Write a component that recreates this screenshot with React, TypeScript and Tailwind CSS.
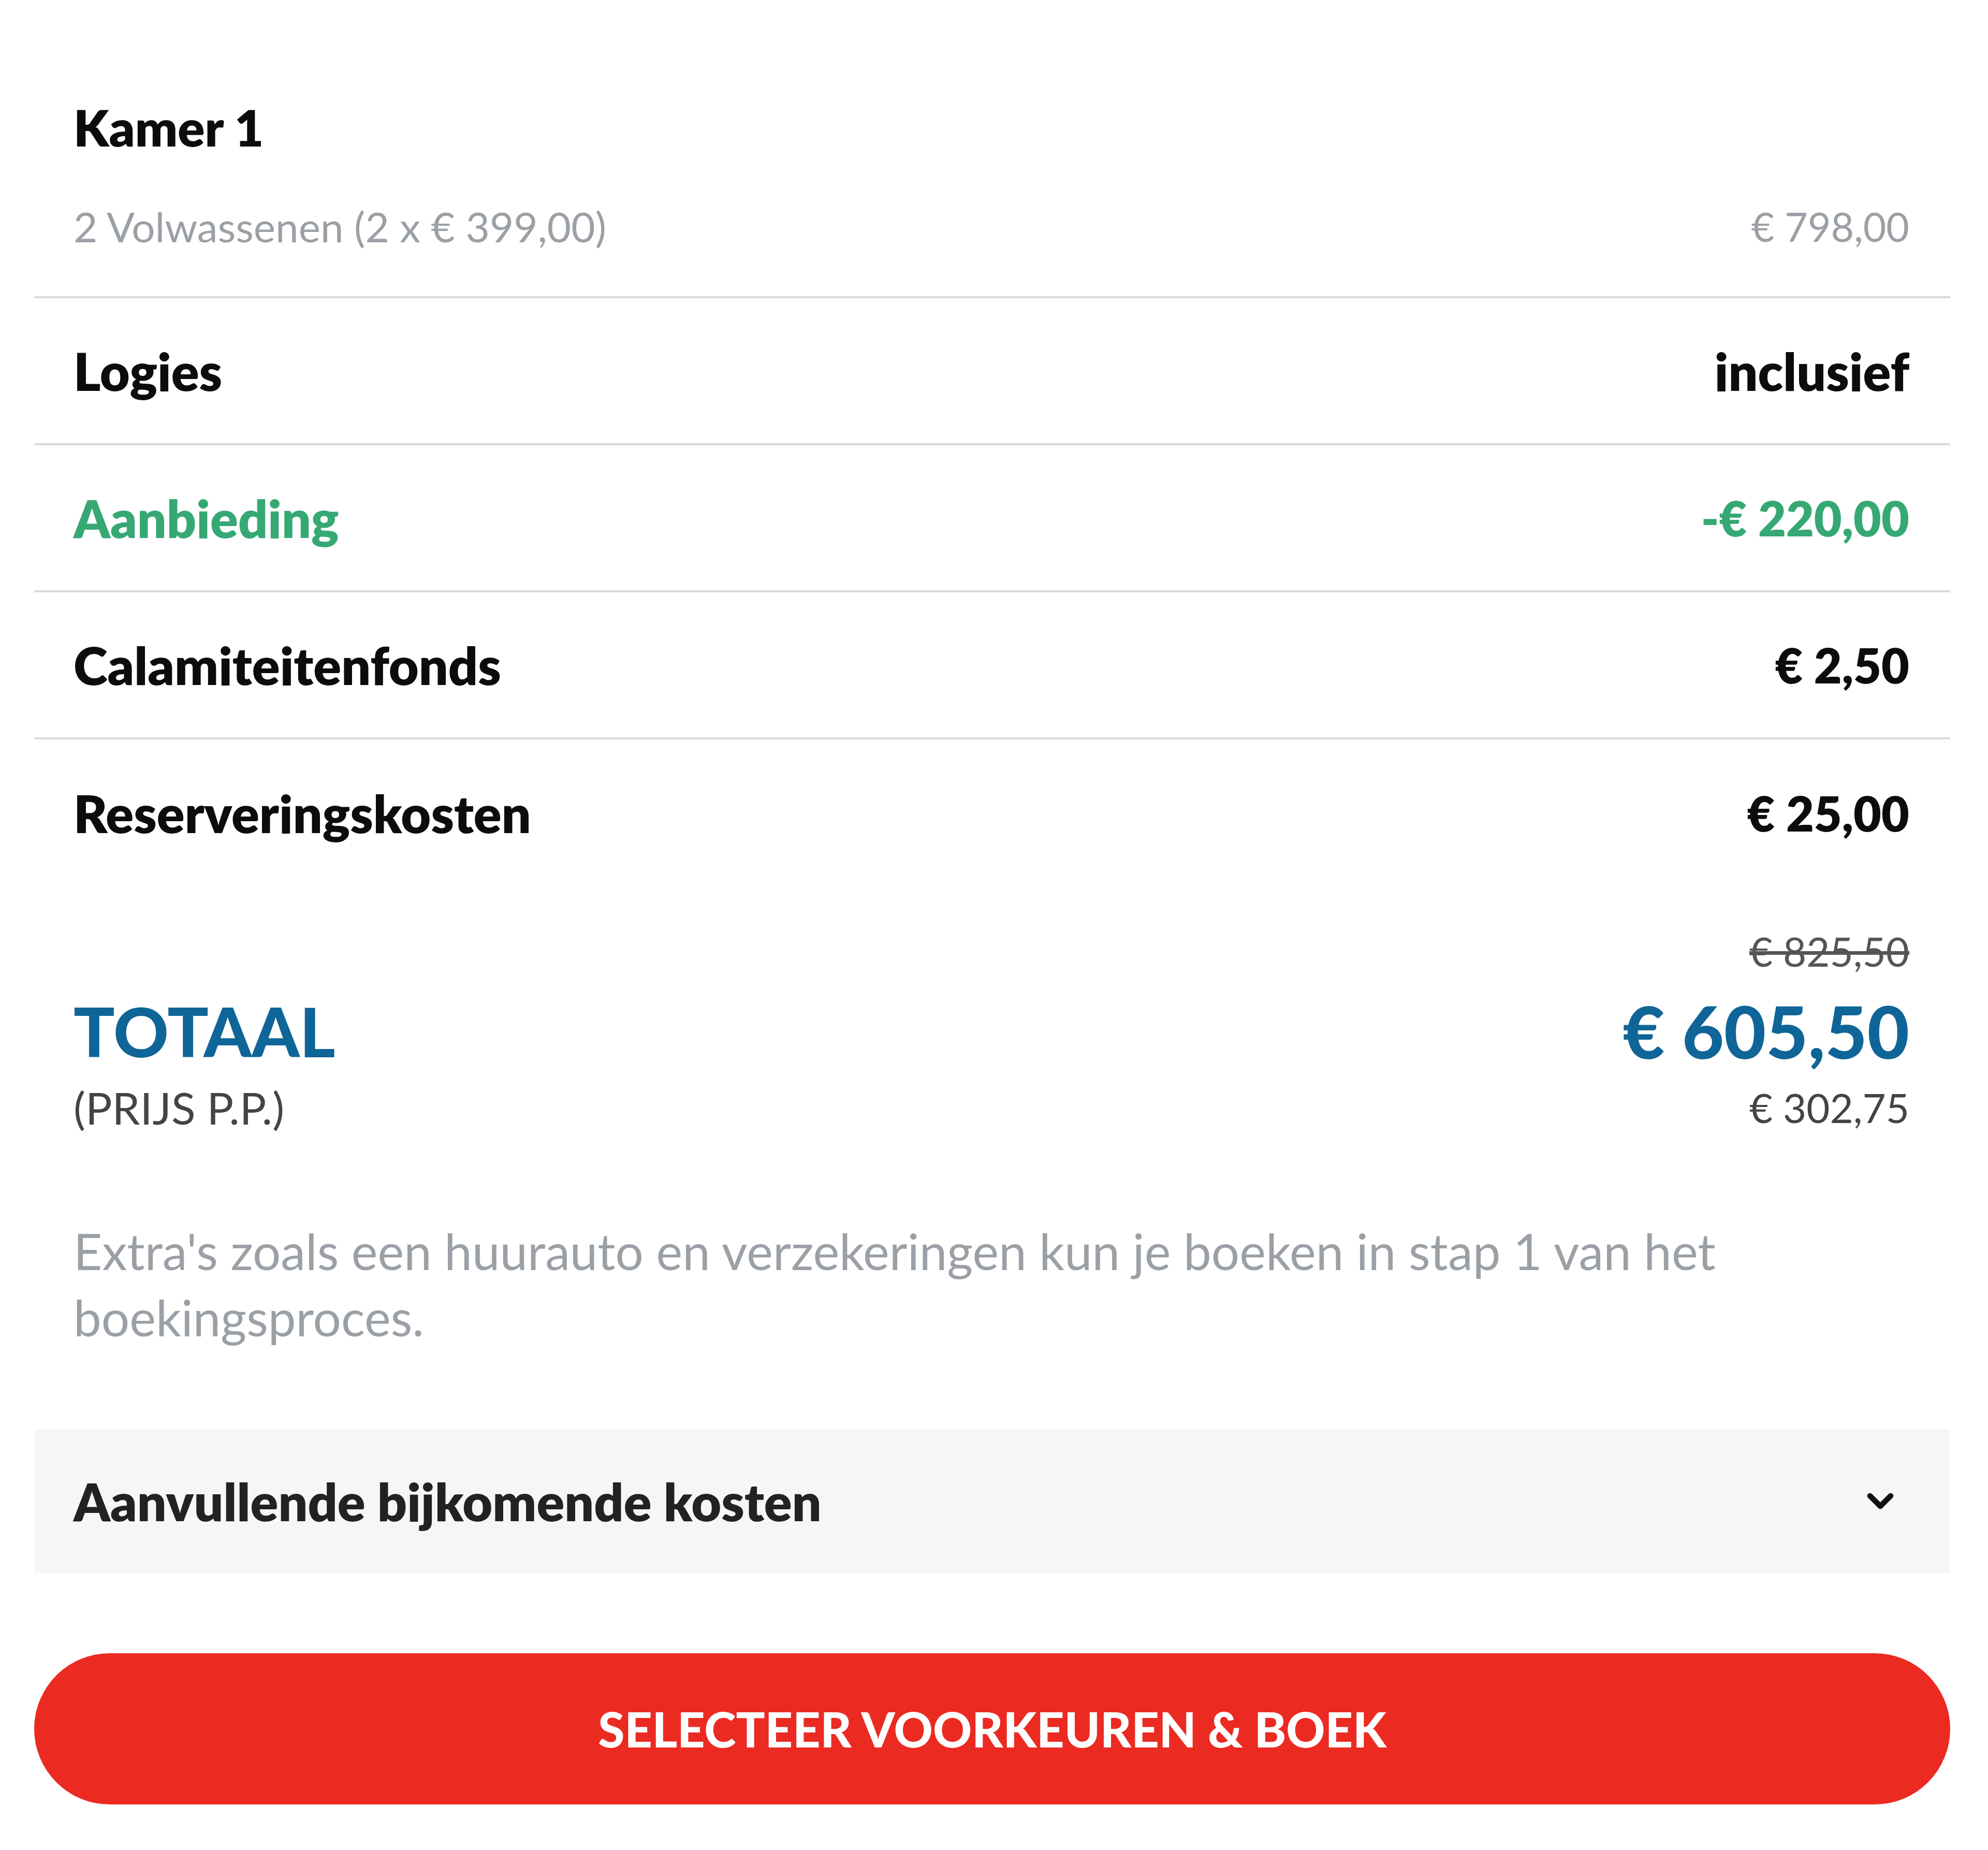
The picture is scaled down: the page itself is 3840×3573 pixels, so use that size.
import React from "react";

const font = { fontFamily: "Lato, 'Noto Sans', sans-serif" };

function Row({
  label,
  value,
  color,
  last,
  wordValue,
}: {
  label: string;
  value: string;
  color?: string;
  last?: boolean;
  wordValue?: boolean;
}) {
  return (
    <div
      className={`flex h-[284px] items-center justify-between pl-[76px] pr-[79px] ${last ? "" : "border-b-[4px] border-[#dadada]"} ${color ?? "text-[#0c0c0c]"}`}
    >
      <span className="text-[100px] font-extrabold leading-none">{label}</span>
      <span className={`${wordValue ? "text-[100px]" : "text-[93px]"} font-extrabold leading-none`}>{value}</span>
    </div>
  );
}

export default function App() {
  return (
    <div className="min-h-[3573px] w-full bg-white pl-[66px] pr-[73px]" style={font}>
      {/* Kamer 1 */}
      <div className="border-b-[4px] border-[#dadada] pb-[75px] pl-[76px] pr-[79px] pt-[186px]">
        <div className="text-[97px] font-extrabold leading-[120px] text-[#0c0c0c]">Kamer 1</div>
        <div className="mt-[71px] flex items-center justify-between leading-[120px] text-[#9ba0a6]">
          <span className="text-[80px]">2 Volwassenen (2 x € 399,00)</span>
          <span className="text-[77px]">€ 798,00</span>
        </div>
      </div>

      <Row label="Logies" value="inclusief" wordValue />
      <Row label="Aanbieding" value="-€ 220,00" color="text-[#36a874]" />
      <Row label="Calamiteitenfonds" value="€ 2,50" />
      <Row label="Reserveringskosten" value="€ 25,00" last />

      {/* Totaal */}
      <div className="grid grid-cols-[1fr_auto] pl-[76px] pr-[79px] pt-[75px]">
        <div />
        <div className="text-right text-[78px] leading-[100px] text-[#555555] line-through">€ 825,50</div>
        <div className="mt-[19px] text-[132px] font-black leading-[170px] text-[#0f6597]">TOTAAL</div>
        <div className="mt-[19px] text-right text-[140px] font-black leading-[170px] text-[#0f6597]">€ 605,50</div>
        <div className="mt-[13px] text-[86px] leading-[100px] text-[#444444]">(PRIJS P.P.)</div>
        <div className="mt-[13px] text-right text-[78px] leading-[100px] text-[#444444]">€ 302,75</div>
      </div>

      {/* Extra's */}
      <p className="mt-[163px] pl-[76px] pr-[79px] text-[96px] leading-[128px] text-[#9aa0a6]">
        Extra's zoals een huurauto en verzekeringen kun je boeken in stap 1 van het boekingsproces.
      </p>

      {/* Aanvullende */}
      <div className="mt-[152px] flex h-[278px] items-center justify-between bg-[#f6f6f6] pl-[76px] pr-[95px]">
        <span className="text-[100px] font-extrabold leading-none text-[#222222]">Aanvullende bijkomende kosten</span>
        <svg width="80" height="80" viewBox="0 0 24 24" fill="none" stroke="#111111" strokeWidth="3.2" strokeLinecap="round" strokeLinejoin="round">
          <path d="M6 9l6 6 6-6" />
        </svg>
      </div>

      {/* Button */}
      <div className="pb-[86px] pt-[155px]">
        <button className="flex h-[292px] w-full items-center justify-center rounded-full bg-[#eb2a22] text-[93px] font-black leading-none text-white">
          SELECTEER VOORKEUREN &amp; BOEK
        </button>
      </div>
    </div>
  );
}
